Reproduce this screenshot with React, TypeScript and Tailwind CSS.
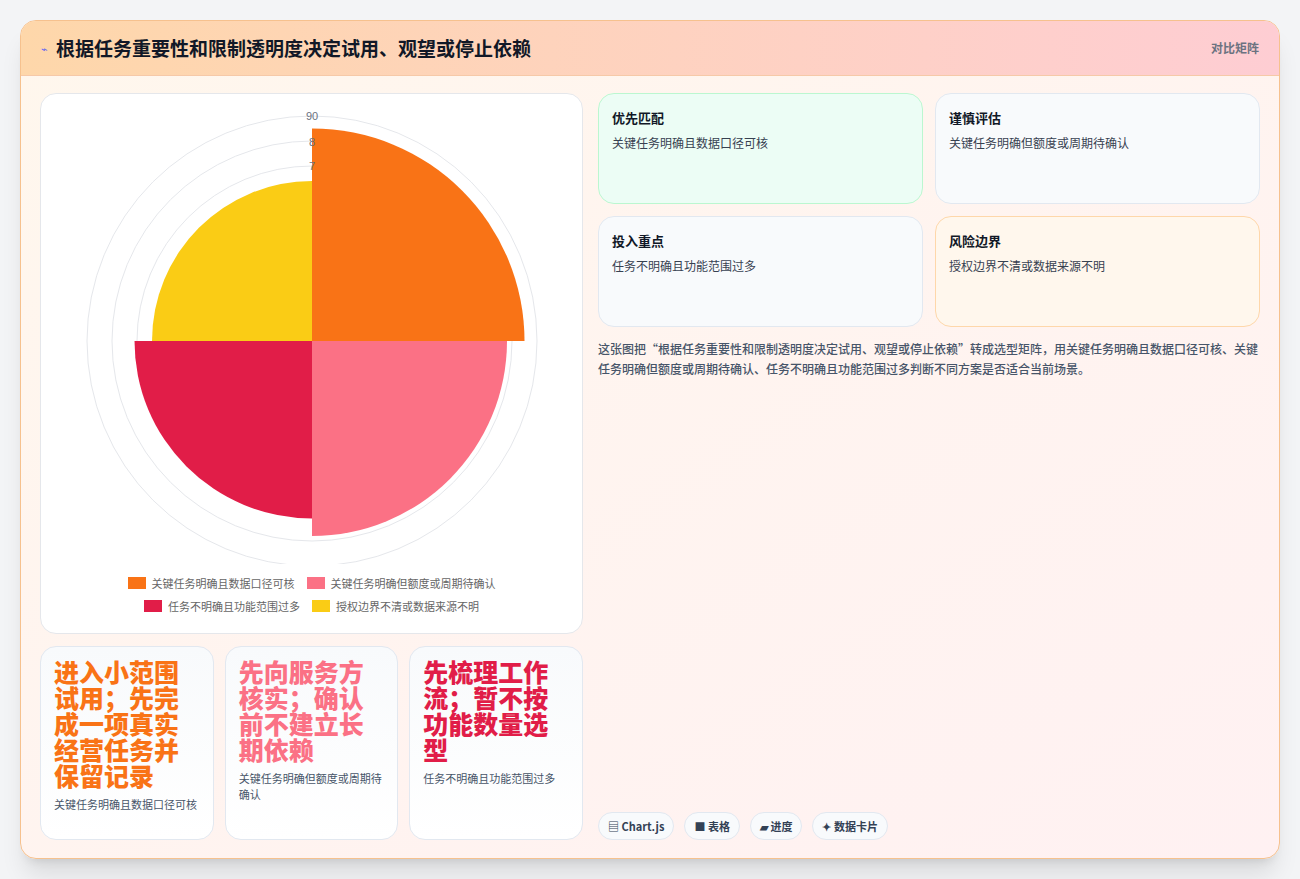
const F = { fontFamily: '"Noto Sans CJK SC", "Noto Sans", sans-serif' }

const C = 310
const wedge = (r: number, a0: number, a1: number) => {
  const p = (a: number) => [C + r * Math.sin(a), C - r * Math.cos(a)]
  const [x0, y0] = p(a0)
  const [x1, y1] = p(a1)
  return `M${C},${C} L${x0},${y0} A${r},${r} 0 0 1 ${x1},${y1} Z`
}

const slices = [
  { v: 85, color: "#f97316", label: "关键任务明确且数据口径可核" },
  { v: 78, color: "#fb7185", label: "关键任务明确但额度或周期待确认" },
  { v: 71, color: "#e11d48", label: "任务不明确且功能范围过多" },
  { v: 64, color: "#facc15", label: "授权边界不清或数据来源不明" },
]

const Q = Math.PI / 2

function Polar() {
  return (
    <svg width="540" height="470" viewBox="40 89 540 470" className="block">
      {[10, 20, 30, 40, 50, 60, 70, 80, 90].map((v) => (
        <circle key={v} cx={C} cy={336} r={v * 2.5} fill="none" stroke="#e5e7eb" strokeWidth="1" />
      ))}
      <g transform="translate(0,26)">
        {slices.map((s, i) => (
          <path key={i} d={wedge(s.v * 2.5, i * Q, (i + 1) * Q)} fill={s.color} />
        ))}
      </g>
      {[
        [90, 111, "90"],
        [80, 137, "8"],
        [70, 161, "7"],
      ].map(([v, y, t]) => (
        <text key={v as number} x={310} y={(y as number) + 4} textAnchor="middle" fontSize="11" fill="#6b7280" fontFamily="Liberation Sans, sans-serif">
          {t}
        </text>
      ))}
    </svg>
  )
}

const quads = [
  { t: "优先匹配", d: "关键任务明确且数据口径可核", cls: "bg-[#ecfdf5] border-[#bbf7d0]" },
  { t: "谨慎评估", d: "关键任务明确但额度或周期待确认", cls: "bg-[#f8fafc] border-[#e2e8f0]" },
  { t: "投入重点", d: "任务不明确且功能范围过多", cls: "bg-[#f8fafc] border-[#e2e8f0]" },
  { t: "风险边界", d: "授权边界不清或数据来源不明", cls: "bg-[#fff7ed] border-[#fed7aa]" },
]

const big = [
  { t: "进入小范围试用；先完成一项真实经营任务并保留记录", d: "关键任务明确且数据口径可核", c: "text-[#f97316]" },
  { t: "先向服务方核实；确认前不建立长期依赖", d: "关键任务明确但额度或周期待确认", c: "text-[#fb7185]" },
  { t: "先梳理工作流；暂不按功能数量选型", d: "任务不明确且功能范围过多", c: "text-[#e11d48]" },
]

export default function App() {
  return (
    <div className="w-[1300px] h-[879px] bg-[#f3f4f6] p-5" style={F}>
      <div className="h-[839px] rounded-2xl border border-[#f6c18e] overflow-hidden flex flex-col bg-gradient-to-br from-[#fff7ed] to-[#fff1f2] shadow-xl">
        <div className="h-[55px] shrink-0 flex items-center justify-between px-5 bg-gradient-to-r from-[#fed7aa] to-[#fecdd3] border-b border-[#f6c9a8]">
          <div className="flex items-center gap-2">
            <span className="text-[11px] text-[#6366f1]">⌁</span>
            <span className="text-[19px] font-bold text-[#111827]">根据任务重要性和限制透明度决定试用、观望或停止依赖</span>
          </div>
          <span className="text-[12px] font-bold text-[#6b7280]">对比矩阵</span>
        </div>
        <div className="flex-1 flex gap-[15px] px-[19px] pt-[17px] pb-[18px]">
          <div className="w-[543px] flex flex-col gap-[12px]">
            <div className="h-[541px] bg-white rounded-2xl border border-[#e5e7eb] flex flex-col items-center">
              <Polar />
              <div className="flex flex-wrap justify-center gap-x-3 gap-y-[6px] w-[420px] mt-[11px] text-[11px] text-[#666]">
                {slices.map((s) => (
                  <div key={s.label} className="flex items-center gap-[6px]">
                    <span className="w-[18px] h-[12px] inline-block" style={{ background: s.color }} />
                    {s.label}
                  </div>
                ))}
              </div>
            </div>
            <div className="flex-1 grid grid-cols-3 gap-[11px]">
              {big.map((b) => (
                <div key={b.t} className="rounded-2xl border border-[#e2e8f0] bg-gradient-to-b from-[#f8fafc] to-white px-[13px] pt-[11px]">
                  <div className={`text-[25px] leading-[26px] font-black ${b.c}`}>{b.t}</div>
                  <div className="mt-2 text-[11px] leading-[16px] text-[#475569]">{b.d}</div>
                </div>
              ))}
            </div>
          </div>
          <div className="flex-1 flex flex-col">
            <div className="grid grid-cols-2 gap-[12px]">
              {quads.map((q) => (
                <div key={q.t} className={`h-[111px] rounded-2xl border px-[13px] pt-[14px] ${q.cls}`}>
                  <div className="text-[13px] font-bold text-[#111827]">{q.t}</div>
                  <div className="mt-[6px] text-[12px] text-[#374151]">{q.d}</div>
                </div>
              ))}
            </div>
            <p className="mt-[12px] text-[12px] leading-[20px] text-[#475569] font-medium">
              这张图把“根据任务重要性和限制透明度决定试用、观望或停止依赖”转成选型矩阵，用关键任务明确且数据口径可核、关键任务明确但额度或周期待确认、任务不明确且功能范围过多判断不同方案是否适合当前场景。
            </p>
            <div className="mt-auto flex gap-[10px]">
              {["▤ Chart.js", "■ 表格", "▰ 进度", "✦ 数据卡片"].map((c) => (
                <span key={c} className="h-[28px] px-[9px] flex items-center rounded-full bg-[#f8fafc] border border-[#e2e8f0] text-[11px] font-bold text-[#334155]">
                  {c}
                </span>
              ))}
            </div>
          </div>
        </div>
      </div>
    </div>
  )
}
